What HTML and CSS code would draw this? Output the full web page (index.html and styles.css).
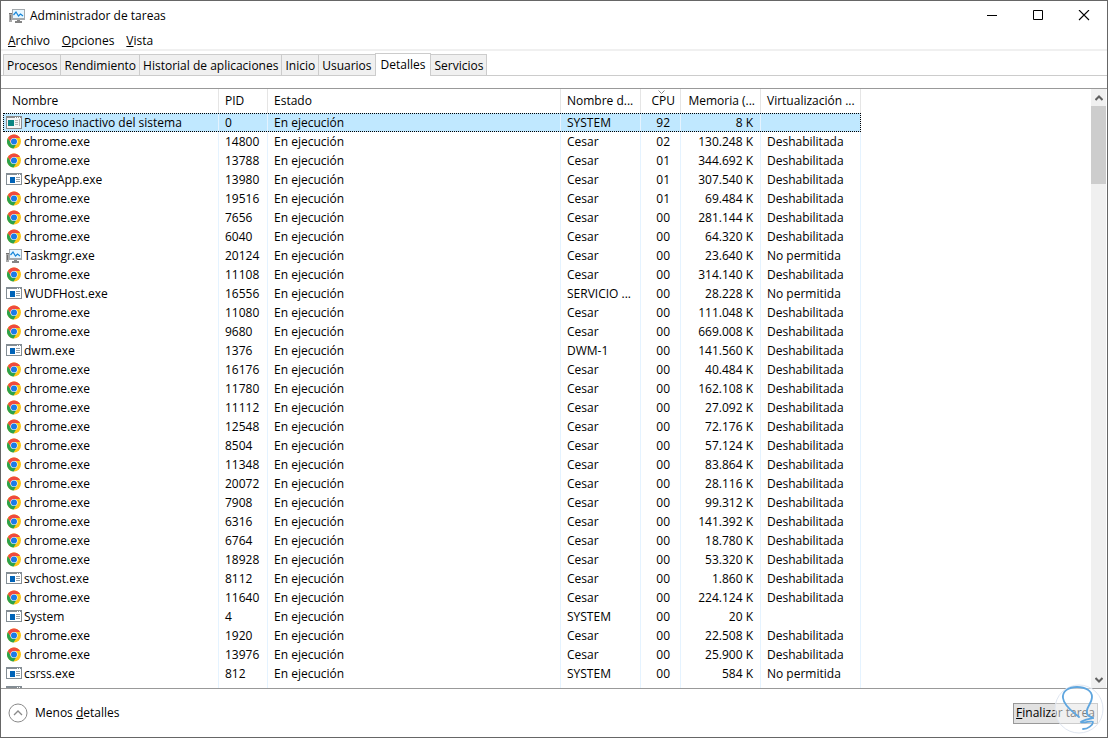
FILE: index.html
```html
<!DOCTYPE html>
<html lang="es">
<head>
    <meta charset="UTF-8">
    <meta name="viewport" content="width=device-width, initial-scale=1.0">
    <title>Administrador de tareas</title>
    <link rel="stylesheet" href="styles.css">
</head>
<body>
    <!-- Iconos compartidos -->
    <svg class="sprite" aria-hidden="true">
        <symbol id="icon-chrome" viewBox="0 0 16 16">
            <circle cx="8" cy="7.500" r="7" fill="#fdc617"/>
            <path d="M1.900 4A7 7 0 0 0 7.600 14.500L11 9 8 7.500 5 9z" fill="#2ba24c"/>
            <path d="M1.900 4A7 7 0 0 1 14.100 4H8L5 9z" fill="#f04a3e"/>
            <circle cx="8" cy="7.500" r="3.600" fill="#fff"/>
            <circle cx="8" cy="7.500" r="3" fill="#1b7be8"/>
        </symbol>
        <symbol id="icon-app" viewBox="0 0 16 16">
            <path d="M0 1h16v12H0z" fill="#848d94"/>
            <path d="M1 3h14v9H1z" fill="#fff"/>
            <path d="M11 2h1v1h-1zM13 2h1v1h-1z" fill="#fff"/>
            <path d="M4 5h5v6H4z" fill="#0063b8"/>
            <path d="M10 5h4v1h-4zM10 7h4v1h-4zM10 9h4v1h-4z" fill="#9aa1a6"/>
        </symbol>
        <symbol id="icon-idle" viewBox="0 0 16 16">
            <path d="M0 1h16v13H0z" fill="#8b8b8b"/>
            <path d="M1 3h14v10H1z" fill="#f5f5f5"/>
            <path d="M9 2h1v1H9zM11 2h1v1h-1zM13 2h1v1h-1z" fill="#fff"/>
            <path d="M2 5h6v6H2z" fill="#0a8583"/>
            <path d="M9 5h3v1H9zM9 7h3v1H9zM9 9h3v1H9zM13 4h1v7h-1z" fill="#b4b4b4"/>
        </symbol>
        <symbol id="icon-taskmgr" viewBox="0 0 16 16">
            <path d="M0 5h3v9H0z" fill="#a9a9a9"/>
            <path d="M0 5h3v1H0zM1 7h1v5H1z" fill="#707070"/>
            <path d="M3 1h13v11H3z" fill="#a3a9ad"/>
            <path d="M4 2h11v8H4z" fill="#e6f6ff"/>
            <path d="M4.500 7 7 4l2.500 4 2-2L14 8" fill="none" stroke="#1686d9" stroke-width="1.200"/>
            <path d="M8 12h3v1h2v2H6v-2h2z" fill="#858585"/>
        </symbol>
    </svg>

    <div class="window">
        <header class="titlebar">
            <svg class="icon"><use href="#icon-taskmgr"/></svg>
            <h1>Administrador de tareas</h1>
            <div class="window-buttons">
                <button type="button" aria-label="Minimizar">
                    <svg width="12" height="12" viewBox="0 0 12 12"><path d="M1 5.500h10" stroke="#000"/></svg>
                </button>
                <button type="button" aria-label="Maximizar">
                    <svg width="12" height="12" viewBox="0 0 12 12"><path d="M1.500 0.500h9v9h-9z" fill="none" stroke="#000"/></svg>
                </button>
                <button type="button" aria-label="Cerrar">
                    <svg width="12" height="12" viewBox="0 0 12 12"><path d="M1 0l10 10M11 0L1 10" stroke="#000" stroke-width="1.100"/></svg>
                </button>
            </div>
        </header>

        <nav class="menu">
            <button type="button"><u>A</u>rchivo</button>
            <button type="button"><u>O</u>pciones</button>
            <button type="button"><u>V</u>ista</button>
        </nav>

        <div class="tabs" role="tablist">
            <button type="button" role="tab" class="tab">Procesos</button>
            <button type="button" role="tab" class="tab">Rendimiento</button>
            <button type="button" role="tab" class="tab">Historial de aplicaciones</button>
            <button type="button" role="tab" class="tab">Inicio</button>
            <button type="button" role="tab" class="tab">Usuarios</button>
            <button type="button" role="tab" class="tab active" aria-selected="true">Detalles</button>
            <button type="button" role="tab" class="tab">Servicios</button>
        </div>

        <main class="details">
            <div class="list">
                <table class="processes">
                    <colgroup>
                        <col class="col-name">
                        <col class="col-pid">
                        <col class="col-state">
                        <col class="col-user">
                        <col class="col-cpu">
                        <col class="col-memory">
                        <col class="col-uac">
                    </colgroup>
                    <thead>
                        <tr>
                            <th class="name">Nombre</th>
                            <th>PID</th>
                            <th>Estado</th>
                            <th>Nombre d...</th>
                            <th class="number sorted">CPU
                                <svg class="sort" width="7" height="4" viewBox="0 0 7 4"><path d="M0.500 0.500l3 3 3-3" fill="none" stroke="#8a8a8a"/></svg>
                            </th>
                            <th class="number">Memoria (...</th>
                            <th>Virtualización ...</th>
                        </tr>
                    </thead>
                    <tbody id="rows"></tbody>
                </table>
            </div>
            <div class="scrollbar">
                <button type="button" aria-label="Subir">
                    <svg width="8" height="6" viewBox="0 0 8 6"><path d="M0.500 5L4 1.500 7.500 5" fill="none" stroke="#606060" stroke-width="2"/></svg>
                </button>
                <div class="thumb"></div>
                <button type="button" class="down" aria-label="Bajar">
                    <svg width="8" height="6" viewBox="0 0 8 6"><path d="M0.500 1L4 4.500 7.500 1" fill="none" stroke="#606060" stroke-width="2"/></svg>
                </button>
            </div>
        </main>

        <footer class="footer">
            <button type="button" class="fewer">
                <svg width="20" height="20" viewBox="0 0 20 20">
                    <circle cx="10" cy="10" r="9" fill="none" stroke="#8a8a8a"/>
                    <path d="M6 12l4-4 4 4" fill="none" stroke="#8a8a8a" stroke-width="1.300"/>
                </svg>
                <span>Menos <u>d</u>etalles</span>
            </button>
            <button type="button" class="end-task"><u>F</u>inalizar tarea</button>
        </footer>

        <svg class="watermark" width="50" height="52" viewBox="0 0 50 52">
            <circle cx="25" cy="26" r="24" fill="#fff" fill-opacity="0.500" stroke="#dfe6f1"/>
            <path d="M25 34C22 31 10 24 9 15 8 8 15 4 23 4c9 0 15 4 15 10 0 7-7 11-5 17 1 2 4 3 6 4" fill="none" stroke="#5fa6df" stroke-width="1.800" stroke-linecap="round"/>
            <path d="M39 35c-3 1-10 2-12 4 2 2 11-2 12 0 0 3-5 7-10 7" fill="none" stroke="#5fa6df" stroke-width="1.800" stroke-linecap="round"/>
        </svg>
    </div>

    <script src="script.js"></script>
</body>
</html>
```

FILE: styles.css
```css
* {
    box-sizing: border-box;
}
body {
    margin: 0;
    font-family: "Segoe UI", "Open Sans", sans-serif;
    font-size: 12px;
    line-height: 16px;
    color: #000;
    background-color: #fff;
}
button {
    margin: 0;
    padding: 0;
    border: none;
    background: none;
    font: inherit;
    color: inherit;
}
svg {
    display: block;
}
.sprite {
    position: absolute;
    width: 0;
    height: 0;
}
.icon {
    flex: none;
    width: 16px;
    height: 16px;
}
.window {
    position: relative;
    display: flex;
    flex-direction: column;
    height: 100vh;
    border: 1px solid #666;
    background-color: #fff;
}

/* Barra de título */
.titlebar {
    display: flex;
    align-items: center;
    flex: none;
    height: 30px;
    padding-left: 8px;
}
.titlebar h1 {
    flex: 1;
    margin: 0 0 0 5px;
    font-size: 12px;
    font-weight: normal;
}
.window-buttons {
    display: flex;
}
.window-buttons button {
    display: flex;
    align-items: center;
    justify-content: center;
    width: 46px;
    height: 28px;
}

/* Menú */
.menu {
    display: flex;
    flex: none;
    gap: 12px;
    height: 20px;
    padding-top: 2px;
    padding-left: 7px;
    border-bottom: 2px solid #f0f0f0;
}

/* Pestañas */
.tabs {
    display: flex;
    align-items: flex-end;
    flex: none;
    height: 25px;
    padding-left: 2px;
    border-bottom: 1px solid #ccc;
}
.tab {
    height: 21px;
    margin-right: -1px;
    padding: 1px 3px 0;
    border: 1px solid #ccc;
    border-bottom: none;
    background-color: #f0f0f0;
}
.tab.active {
    height: 23px;
    margin-bottom: -1px;
    padding: 0 5px 1px;
    background-color: #fff;
}

/* Lista de procesos */
.details {
    display: flex;
    flex: 1;
    min-height: 0;
    margin-top: 12px;
    padding: 0 1px 0 2px;
    border-top: 1px solid #999;
    border-bottom: 1px solid #999;
}
.list {
    flex: 1;
    overflow: hidden;
}
.processes {
    width: 858px;
    table-layout: fixed;
    border-collapse: separate;
    border-spacing: 0;
}
.col-name { width: 216px; }
.col-pid { width: 49px; }
.col-state { width: 293px; }
.col-user { width: 80px; }
.col-cpu { width: 40px; }
.col-memory { width: 80px; }
.col-uac { width: 100px; }
.processes th,
.processes td {
    padding: 0 6px;
    text-align: left;
    font-weight: normal;
    white-space: nowrap;
    overflow: hidden;
}
.processes th {
    height: 24px;
    border-right: 1px solid #e5e5e5;
}
.processes th.name {
    padding-left: 9px;
}
.processes th.number {
    padding-right: 5px;
    text-align: right;
}
.processes td {
    height: 19px;
    border-right: 1px solid #e5f3ff;
}
.processes td.number {
    padding-right: 7px;
    text-align: right;
}
.processes td.cpu {
    padding-right: 10px;
}
.processes td.name {
    padding-left: 3px;
}
.process {
    display: flex;
    align-items: center;
    gap: 2px;
}
.selected {
    background-color: #c0e8ff;
    outline: 1px dotted #000;
    outline-offset: -1px;
}
.sorted {
    position: relative;
}
.sort {
    position: absolute;
    top: 1px;
    left: 17px;
}

/* Barra de desplazamiento */
.scrollbar {
    display: flex;
    flex-direction: column;
    width: 15px;
    background-color: #f0f0f0;
}
.scrollbar button {
    display: flex;
    align-items: center;
    justify-content: center;
    height: 17px;
}
.scrollbar .down {
    margin-top: auto;
}
.thumb {
    height: 78px;
    background-color: #cdcdcd;
}

/* Pie */
.footer {
    display: flex;
    align-items: center;
    justify-content: space-between;
    flex: none;
    height: 48px;
    padding: 0 9px 0 7px;
}
.fewer {
    display: flex;
    align-items: center;
    gap: 7px;
}
.end-task {
    height: 21px;
    padding: 0 2px;
    border: 1px solid #999;
    background-color: #e1e1e1;
}
.watermark {
    position: absolute;
    right: 3px;
    bottom: 2px;
    pointer-events: none;
}
```

FILE: script.js
```js
// icono, nombre, PID, usuario, CPU, memoria, virtualización
const procesos = [
    ['idle', 'Proceso inactivo del sistema', '0', 'SYSTEM', '92', '8 K', ''],
    ['chrome', 'chrome.exe', '14800', 'Cesar', '02', '130.248 K', 'Deshabilitada'],
    ['chrome', 'chrome.exe', '13788', 'Cesar', '01', '344.692 K', 'Deshabilitada'],
    ['app', 'SkypeApp.exe', '13980', 'Cesar', '01', '307.540 K', 'Deshabilitada'],
    ['chrome', 'chrome.exe', '19516', 'Cesar', '01', '69.484 K', 'Deshabilitada'],
    ['chrome', 'chrome.exe', '7656', 'Cesar', '00', '281.144 K', 'Deshabilitada'],
    ['chrome', 'chrome.exe', '6040', 'Cesar', '00', '64.320 K', 'Deshabilitada'],
    ['taskmgr', 'Taskmgr.exe', '20124', 'Cesar', '00', '23.640 K', 'No permitida'],
    ['chrome', 'chrome.exe', '11108', 'Cesar', '00', '314.140 K', 'Deshabilitada'],
    ['app', 'WUDFHost.exe', '16556', 'SERVICIO ...', '00', '28.228 K', 'No permitida'],
    ['chrome', 'chrome.exe', '11080', 'Cesar', '00', '111.048 K', 'Deshabilitada'],
    ['chrome', 'chrome.exe', '9680', 'Cesar', '00', '669.008 K', 'Deshabilitada'],
    ['app', 'dwm.exe', '1376', 'DWM-1', '00', '141.560 K', 'Deshabilitada'],
    ['chrome', 'chrome.exe', '16176', 'Cesar', '00', '40.484 K', 'Deshabilitada'],
    ['chrome', 'chrome.exe', '11780', 'Cesar', '00', '162.108 K', 'Deshabilitada'],
    ['chrome', 'chrome.exe', '11112', 'Cesar', '00', '27.092 K', 'Deshabilitada'],
    ['chrome', 'chrome.exe', '12548', 'Cesar', '00', '72.176 K', 'Deshabilitada'],
    ['chrome', 'chrome.exe', '8504', 'Cesar', '00', '57.124 K', 'Deshabilitada'],
    ['chrome', 'chrome.exe', '11348', 'Cesar', '00', '83.864 K', 'Deshabilitada'],
    ['chrome', 'chrome.exe', '20072', 'Cesar', '00', '28.116 K', 'Deshabilitada'],
    ['chrome', 'chrome.exe', '7908', 'Cesar', '00', '99.312 K', 'Deshabilitada'],
    ['chrome', 'chrome.exe', '6316', 'Cesar', '00', '141.392 K', 'Deshabilitada'],
    ['chrome', 'chrome.exe', '6764', 'Cesar', '00', '18.780 K', 'Deshabilitada'],
    ['chrome', 'chrome.exe', '18928', 'Cesar', '00', '53.320 K', 'Deshabilitada'],
    ['app', 'svchost.exe', '8112', 'Cesar', '00', '1.860 K', 'Deshabilitada'],
    ['chrome', 'chrome.exe', '11640', 'Cesar', '00', '224.124 K', 'Deshabilitada'],
    ['app', 'System', '4', 'SYSTEM', '00', '20 K', ''],
    ['chrome', 'chrome.exe', '1920', 'Cesar', '00', '22.508 K', 'Deshabilitada'],
    ['chrome', 'chrome.exe', '13976', 'Cesar', '00', '25.900 K', 'Deshabilitada'],
    ['app', 'csrss.exe', '812', 'SYSTEM', '00', '584 K', 'No permitida'],
    ['app', '', '', '', '', '', '']
];

document.getElementById('rows').innerHTML = procesos.map(function(p, i) {
    return `<tr${i === 0 ? ' class="selected"' : ''}>
        <td class="name"><div class="process"><svg class="icon"><use href="#icon-${p[0]}"/></svg>${p[1]}</div></td>
        <td>${p[2]}</td>
        <td>${p[2] ? 'En ejecución' : ''}</td>
        <td>${p[3]}</td>
        <td class="number cpu">${p[4]}</td>
        <td class="number">${p[5]}</td>
        <td>${p[6]}</td>
    </tr>`;
}).join('');
```
